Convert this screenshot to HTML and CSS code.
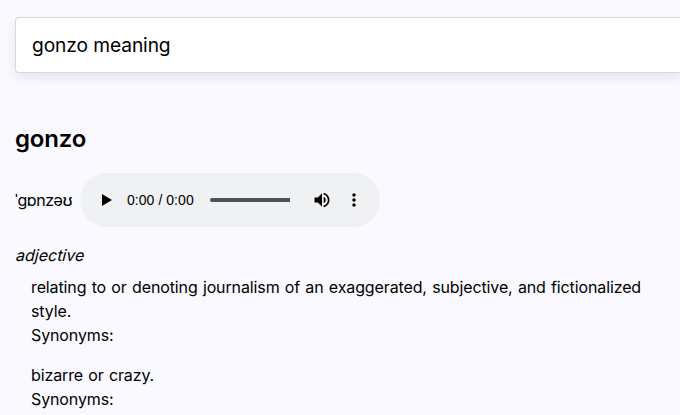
FILE: index.html
```html
<!DOCTYPE html>
<html lang="en">
<head>
<meta charset="utf-8">
<title>gonzo meaning</title>
<link rel="stylesheet" href="styles.css">
</head>
<body>
<div class="search">gonzo meaning</div>
<h1 class="word">gonzo</h1>
<div class="pronunciation">
  <span class="phonetic">ˈɡɒnzəʊ</span>
  <div class="player">
    <svg class="icon" viewBox="0 0 20 20"><path d="M5 4v12l10-6z"/></svg>
    <span class="time">0:00 / 0:00</span>
    <div class="track"></div>
    <svg class="icon volume" viewBox="0 0 24 24"><path d="M3 9v6h4l5 5V4L7 9H3zm13.5 3c0-1.77-1.02-3.29-2.5-4.03v8.05c1.48-.73 2.5-2.25 2.5-4.02zM14 3.23v2.06c2.89.86 5 3.54 5 6.71s-2.11 5.85-5 6.71v2.06c4.01-.91 7-4.49 7-8.77s-2.99-7.86-7-8.77z"/></svg>
    <svg class="icon more" viewBox="0 0 24 24"><path d="M12 8c1.1 0 2-.9 2-2s-.9-2-2-2-2 .9-2 2 .9 2 2 2zm0 2c-1.1 0-2 .9-2 2s.9 2 2 2 2-.9 2-2-.9-2-2-2zm0 6c-1.1 0-2 .9-2 2s.9 2 2 2 2-.9 2-2-.9-2-2-2z"/></svg>
  </div>
</div>
<div class="part"><span class="slanted">adjective</span></div>
<div class="definition">
  <div>relating to or denoting journalism of an exaggerated, subjective, and fictionalized style.</div>
  <div>Synonyms:</div>
</div>
<div class="definition">
  <div>bizarre or crazy.</div>
  <div>Synonyms:</div>
</div>
</body>
</html>
```
FILE: styles.css
```css
* { box-sizing: border-box; }
html { overflow: hidden; }
body {
  margin: 0;
  padding: 17px 15px 0;
  background: #f9f9ff;
  color: #000;
  font: 16px/24px Inter, sans-serif;
}
.search {
  margin-right: -15px;
  height: 56px;
  padding: 0 16px;
  border: 1px solid #d8d8da;
  border-right: 0;
  border-radius: 4px 0 0 4px;
  background: #fff;
  box-shadow: 0 5px 12px rgba(0, 0, 0, .08), 12px 5px 12px rgba(0, 0, 0, .01);
  font-size: 19.2px;
  line-height: 54px;
  letter-spacing: -.13px;
  word-spacing: .3px;
}
.word { margin: 48px 0 0; font-size: 24px; line-height: 36px; font-weight: 600; letter-spacing: -.15px; }
.pronunciation { display: flex; align-items: center; margin-top: 16px; }
.phonetic { width: 65px; letter-spacing: -.4px; white-space: nowrap; }
.player {
  display: flex;
  align-items: center;
  width: 300px;
  height: 54px;
  padding-left: 17px;
  border-radius: 27px;
  background: #eff1f2;
}
.icon { width: 20px; height: 20px; flex: none; }
.time { width: 67px; margin-left: 10px; font: 14px/20px "Liberation Sans", sans-serif; letter-spacing: .05px; white-space: nowrap; }
.track { width: 80px; height: 4px; margin-left: 16px; border-radius: 2px 0 0 2px; background: #505152; }
.volume { margin-left: 22px; }
.more { margin-left: 12px; }
.part { margin-top: 16px; }
.slanted { display: inline-block; transform: skewX(-14deg); transform-origin: 0 75%; }
.definition { margin: 8px 0 0 16px; letter-spacing: -.12px; word-spacing: .9px; }
.definition + .definition { margin-top: 16px; }
```
